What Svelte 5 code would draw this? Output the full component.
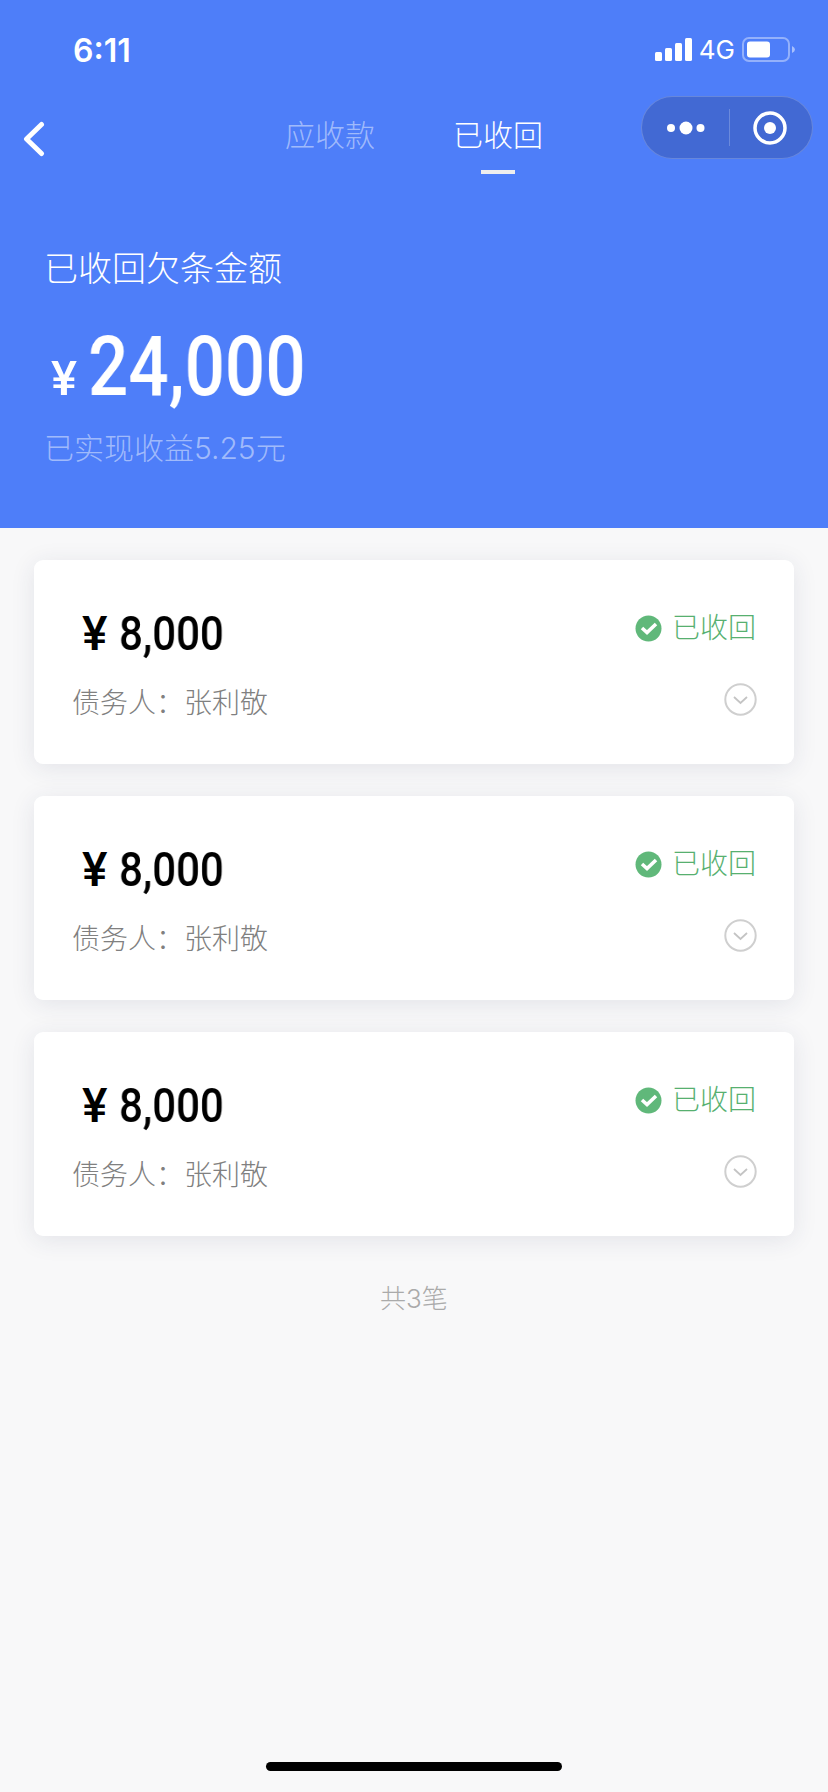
<script>
  const cards = [1, 2, 3];
</script>

<div class="page">
  <header class="hero">
    <div class="status">
      <span class="time">6:11</span>
      <div class="status-right">
        <svg class="signal" width="37" height="23" viewBox="0 0 37 23" aria-hidden="true">
          <rect x="0" y="14" width="7" height="9" rx="1.5" fill="#fff" />
          <rect x="10" y="10" width="7" height="13" rx="1.5" fill="#fff" />
          <rect x="20" y="5" width="7" height="18" rx="1.5" fill="#fff" />
          <rect x="30" y="0" width="7" height="23" rx="1.5" fill="#fff" />
        </svg>
        <span class="net">4G</span>
        <svg class="battery" width="54" height="25" viewBox="0 0 54 25" aria-hidden="true">
          <rect x="1" y="1" width="46" height="23" rx="6" fill="none" stroke="#fff" stroke-opacity=".4" stroke-width="2" />
          <rect x="5" y="4.500" width="23" height="16" rx="3" fill="#fff" />
          <path d="M50 9 q3 1.500 3 3.500 t-3 3.500z" fill="#fff" fill-opacity=".5" />
        </svg>
      </div>
    </div>

    <nav class="nav">
      <svg class="back" width="22" height="36" viewBox="0 0 22 36" aria-hidden="true">
        <path d="M18.500 3.500 L3.500 18 L18.500 32.500" fill="none" stroke="#fff" stroke-width="5" stroke-linecap="round" stroke-linejoin="round" />
      </svg>
      <div class="tabs">
        <span class="tab">应收款</span>
        <span class="tab active">已收回</span>
      </div>
      <div class="capsule">
        <svg width="38" height="14" viewBox="0 0 38 14" aria-hidden="true">
          <circle cx="4" cy="7" r="4" fill="#fff" />
          <circle cx="19" cy="7" r="6.500" fill="#fff" />
          <circle cx="33.500" cy="7" r="4" fill="#fff" />
        </svg>
        <i class="divider"></i>
        <svg width="34" height="34" viewBox="0 0 34 34" aria-hidden="true">
          <circle cx="17" cy="17" r="15" fill="none" stroke="#fff" stroke-width="3.500" />
          <circle cx="17" cy="17" r="6" fill="#fff" />
        </svg>
      </div>
    </nav>

    <div class="summary">
      <div class="summary-title">已收回欠条金额</div>
      <div class="total">
        <span class="yen">¥</span>
        <span class="total-num">24,000</span>
      </div>
      <div class="summary-sub">已实现收益5.25元</div>
    </div>
  </header>

  <main class="list">
    {#each cards as card (card)}
      <section class="card">
        <div class="row">
          <div class="amount">
            <span class="card-yen">¥</span>
            <span class="card-num">8,000</span>
          </div>
          <div class="state">
            <svg width="27" height="27" viewBox="0 0 27 27" aria-hidden="true">
              <circle cx="13.500" cy="13.500" r="13" fill="#60b87a" />
              <path d="M7 13 L12 17.500 L21 9" fill="none" stroke="#fff" stroke-width="3.600" />
            </svg>
            <span>已收回</span>
          </div>
        </div>
        <div class="row second">
          <div class="debtor">债务人：张利敬</div>
          <svg class="chev" width="33" height="33" viewBox="0 0 33 33" aria-hidden="true">
            <circle cx="16.500" cy="16.500" r="15.200" fill="none" stroke="#cfcfcf" stroke-width="2" />
            <path d="M10 14 L16.500 20 L23 14" fill="none" stroke="#c4c4c4" stroke-width="1.800" />
          </svg>
        </div>
      </section>
    {/each}
    <div class="count">共3笔</div>
  </main>

  <div class="home"></div>
</div>

<style>
  :global(body) {
    margin: 0;
    background: #f8f8f9;
  }

  .page {
    min-height: 1792px;
    display: flex;
    flex-direction: column;
    font-family: Inter, "Noto Sans CJK SC", sans-serif;
    font-weight: 300;
  }

  .hero {
    height: 528px;
    background: #4e7ef9;
    color: #fff;
  }

  .status {
    height: 88px;
    padding: 12px 32px 0 73px;
    display: flex;
    align-items: center;
    justify-content: space-between;
    box-sizing: border-box;
  }

  .time {
    font-family: Inter, sans-serif;
    font-weight: 600;
    font-size: 32px;
  }

  .status-right {
    display: flex;
    align-items: center;
    gap: 7px;
    margin-top: -2px;
  }

  .net {
    font-family: Inter, sans-serif;
    font-weight: 400;
    font-size: 26px;
  }

  .nav {
    height: 88px;
    padding: 0 15px;
    display: grid;
    grid-template-columns: 1fr auto 1fr;
    align-items: center;
  }

  .back {
    margin: 14px 0 0 8px;
  }

  .tabs {
    display: flex;
    gap: 78px;
    margin-top: 5px;
  }

  .tab {
    position: relative;
    font-size: 30px;
    line-height: 40px;
    color: rgba(255, 255, 255, 0.48);
  }

  .tab.active {
    color: #fff;
  }

  .tab.active::after {
    content: "";
    position: absolute;
    left: 28px;
    bottom: -19px;
    width: 34px;
    height: 4px;
    background: #eee;
  }

  .capsule {
    justify-self: end;
    width: 172px;
    height: 63px;
    box-sizing: border-box;
    margin-top: -9px;
    display: flex;
    align-items: center;
    justify-content: space-between;
    padding: 0 25px;
    background: #4269d3;
    border: 1px solid rgba(255, 255, 255, 0.2);
    border-radius: 32px;
  }

  .divider {
    width: 1px;
    height: 37px;
    background: rgba(255, 255, 255, 0.22);
  }

  .summary {
    padding: 69px 44px 0;
  }

  .summary-title {
    font-size: 34px;
    line-height: 48px;
  }

  .total {
    display: flex;
    align-items: baseline;
    margin-top: 26px;
    height: 96px;
  }

  .yen {
    font-family: Roboto, sans-serif;
    font-size: 49px;
    font-weight: 500;
    margin: 0 11px 0 7px;
  }

  .total-num {
    display: inline-block;
    font-family: Roboto, sans-serif;
    font-weight: 500;
    font-size: 84px;
    line-height: 96px;
    transform: scaleX(0.845);
    transform-origin: left center;
    will-change: transform;
  }

  .summary-sub {
    margin-top: 12px;
    font-size: 30px;
    line-height: 42px;
    color: rgba(255, 255, 255, 0.48);
  }

  .list {
    padding: 32px 34px 0;
    display: flex;
    flex-direction: column;
    gap: 32px;
  }

  .card {
    height: 204px;
    box-sizing: border-box;
    padding: 45px 38px 0 38px;
    background: #fff;
    border-radius: 9px;
    box-shadow: 0 4px 24px rgba(40, 50, 90, 0.1);
  }

  .row {
    display: flex;
    align-items: center;
    justify-content: space-between;
  }

  .second {
    margin-top: 22px;
  }

  .amount {
    display: flex;
    align-items: baseline;
    height: 56px;
    color: #000;
    padding-left: 10px;
  }

  .card-yen {
    font-family: Roboto, sans-serif;
    font-weight: 500;
    font-size: 48px;
    width: 37px;
  }

  .card-num {
    display: inline-block;
    font-family: Roboto, sans-serif;
    font-weight: 500;
    font-size: 48px;
    line-height: 56px;
    transform: scaleX(0.875);
    transform-origin: left center;
    will-change: transform;
  }

  .state {
    display: flex;
    align-items: center;
    gap: 10px;
    color: #57b070;
    font-size: 28px;
    line-height: 40px;
    margin-top: -10px;
  }

  .debtor {
    font-size: 28px;
    line-height: 40px;
    color: #808080;
  }

  .chev {
    margin-top: -8px;
    margin-right: -1px;
  }

  .count {
    margin-top: 14px;
    text-align: center;
    font-size: 26px;
    line-height: 34px;
    color: #aaa;
  }

  .home {
    margin: auto auto 21px;
    width: 296px;
    height: 9px;
    border-radius: 5px;
    background: #000;
  }
</style>
